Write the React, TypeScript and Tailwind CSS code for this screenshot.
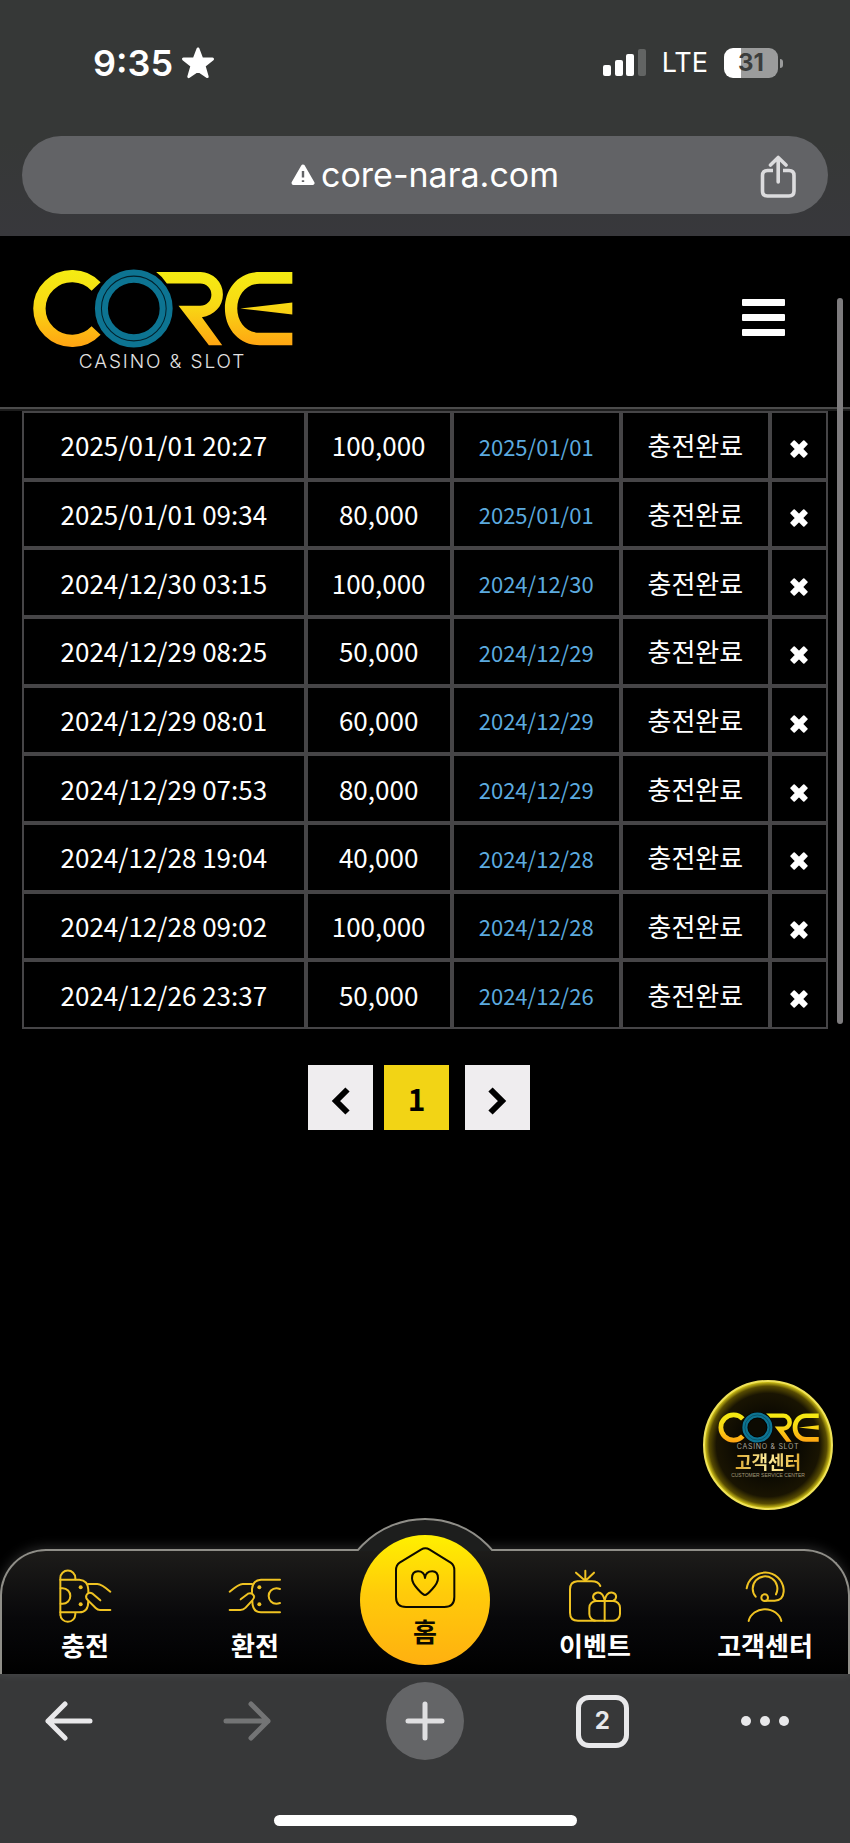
import React from "react";

type Deposit = { requested: string; amount: string; processed: string };

const deposits: Deposit[] = [
  { requested: "2025/01/01 20:27", amount: "100,000", processed: "2025/01/01" },
  { requested: "2025/01/01 09:34", amount: "80,000", processed: "2025/01/01" },
  { requested: "2024/12/30 03:15", amount: "100,000", processed: "2024/12/30" },
  { requested: "2024/12/29 08:25", amount: "50,000", processed: "2024/12/29" },
  { requested: "2024/12/29 08:01", amount: "60,000", processed: "2024/12/29" },
  { requested: "2024/12/29 07:53", amount: "80,000", processed: "2024/12/29" },
  { requested: "2024/12/28 19:04", amount: "40,000", processed: "2024/12/28" },
  { requested: "2024/12/28 09:02", amount: "100,000", processed: "2024/12/28" },
  { requested: "2024/12/26 23:37", amount: "50,000", processed: "2024/12/26" },
];

function CoreMark({ className, id }: { className: string; id: string }) {
  const fill = `url(#${id})`;
  return (
    <svg className={className} viewBox="96 118 782 236" aria-hidden="true">
      <defs>
        <linearGradient id={id} gradientUnits="userSpaceOnUse" x1="0" y1="120" x2="0" y2="350">
          <stop offset="0" stopColor="#f4ec12" />
          <stop offset="0.45" stopColor="#f8da14" />
          <stop offset="1" stopColor="#ffa412" />
        </linearGradient>
      </defs>
      <path d="M288 170A98 97 0 1 0 288 302" fill="none" stroke={fill} strokeWidth="37" />
      <path
        d="M468 127H600A67 67 0 0 1 668 194C668 230 642 256 605 262L666 346H626L535 228H600A33 33 0 0 0 600 161H500Q488 142 468 127Z"
        fill={fill}
      />
      <path
        d="M876 127H778C712 127 674 180 674 236C674 292 712 346 778 346H876V309H778C736 309 711 275 711 236C711 197 736 162 778 162H876Z"
        fill={fill}
      />
      <path d="M720 236L876 218V254Z" fill={fill} />
      <circle cx="401" cy="236" r="96" fill="none" stroke="#000" strokeWidth="50" />
      <circle cx="401" cy="236" r="97" fill="none" stroke="#0d7492" strokeWidth="39" />
      <circle cx="401" cy="236" r="97" fill="none" stroke="#02202b" strokeWidth="3" />
    </svg>
  );
}

function StatusBar() {
  return (
    <div className="flex h-[136px] items-center justify-between pr-[67px] pb-[10px] pl-[93px] text-white">
      <div className="flex items-center gap-2">
        <span className="text-[36px] leading-10 font-semibold">9:35</span>
        <svg className="h-8 w-[34px]" viewBox="0 0 34 32" aria-hidden="true">
          <path
            d="M17 2L20.8 12H31.5L23 18.8L26.2 29.6L17 23.3L7.8 29.6L11 18.8L2.500 12H13.200Z"
            fill="#fff"
            stroke="#fff"
            strokeWidth="3"
            strokeLinejoin="round"
          />
        </svg>
      </div>
      <div className="flex items-center">
        <svg className="h-7 w-[43px]" viewBox="0 0 43 28" aria-hidden="true">
          <rect x="0" y="16" width="8" height="11" rx="2" fill="#fff" />
          <rect x="12" y="11" width="8" height="16" rx="2" fill="#fff" />
          <rect x="23" y="5" width="8" height="22" rx="2" fill="#fff" />
          <rect x="35" y="0" width="8" height="27" rx="2" fill="#626463" />
        </svg>
        <span className="ml-4 text-[27px] leading-10">LTE</span>
        <div className="ml-4 flex h-[30px] w-[54px] items-center justify-center rounded-[9px] bg-[linear-gradient(90deg,#fff_17px,#9b9c9c_17px)] text-[24px] font-bold text-[#3b3d3c]">
          31
        </div>
        <span className="ml-[2px] h-[9px] w-[3px] rounded-r-full bg-[#9b9c9c]" />
      </div>
    </div>
  );
}

function AddressBar() {
  return (
    <div className="mx-[22px] flex h-[78px] items-center rounded-full bg-[#626366] pr-8 pl-[68px]">
      <button type="button" className="flex flex-1 items-center justify-center gap-[6px] text-[34px] leading-10 text-white">
        <svg className="h-[22px] w-6" viewBox="0 0 24 22" aria-hidden="true">
          <path d="M12 2.500L21.500 19H2.500Z" fill="#fff" stroke="#fff" strokeWidth="4" strokeLinejoin="round" />
          <path d="M12 7V13.500M12 16.300V18" stroke="#626366" strokeWidth="2.400" />
        </svg>
        <span>core-nara.com</span>
      </button>
      <button type="button" aria-label="공유">
        <svg className="mt-1 h-11 w-9" viewBox="0 0 36 44" fill="none" stroke="#dcdcde" strokeWidth="3.600" aria-hidden="true">
          <path d="M13 15.500H7.500Q2.500 15.500 2.500 20.500V36Q2.500 41 7.500 41H29Q34 41 34 36V20.500Q34 15.500 29 15.500H23" />
          <path d="M18.200 27V3M10.500 10L18.200 2.500L26 10" strokeLinecap="round" strokeLinejoin="round" />
        </svg>
      </button>
    </div>
  );
}

function SiteHeader() {
  return (
    <header className="flex h-[175px] items-start justify-between border-b-2 border-[#1c1c1c] pr-[65px] pl-8 shadow-[inset_0_-2px_0_#4b4b4b]">
      <a href="#home" className="flex flex-col items-center pt-[33px] text-[#e2e2e2]">
        <CoreMark className="h-[79px] w-[261px]" id="mark-header" />
        <span className="mt-1 text-[19px] leading-5 font-light tracking-widest">CASINO &amp; SLOT</span>
      </a>
      <button type="button" aria-label="메뉴" className="mt-[63px] flex w-[43px] flex-col gap-2">
        <span className="h-[7px] rounded-[1px] bg-white" />
        <span className="h-[7px] rounded-[1px] bg-white" />
        <span className="h-[7px] rounded-[1px] bg-white" />
      </button>
    </header>
  );
}

function DepositTable() {
  return (
    <div className="px-[22px]">
      <table className="h-[618px] w-full table-fixed border-separate border-spacing-0 text-center text-[26px] leading-8 text-white">
        <colgroup>
          <col className="w-[35.200%]" />
          <col className="w-[18.100%]" />
          <col className="w-[21%]" />
          <col className="w-[18.500%]" />
          <col className="w-[7.200%]" />
        </colgroup>
        <tbody>
          {deposits.map((d) => (
            <tr key={d.requested}>
              <td className="border-2 border-[#464547] p-0">{d.requested}</td>
              <td className="border-2 border-[#464547] p-0">{d.amount}</td>
              <td className="border-2 border-[#464547] p-0">
                <a href="#detail" className="text-[22px] text-[#5caadf]">
                  {d.processed}
                </a>
              </td>
              <td className="border-2 border-[#464547] p-0">충전완료</td>
              <td className="border-2 border-[#464547] p-0 pt-2">
                <button type="button" aria-label="삭제" className="mx-auto block">
                  <svg className="h-[18px] w-[18px]" viewBox="0 0 18 18" aria-hidden="true">
                    <path
                      d="M4.200 1.200L9 6L13.800 1.200L16.800 4.200L12 9L16.800 13.800L13.800 16.800L9 12L4.200 16.800L1.200 13.800L6 9L1.200 4.200Z"
                      fill="#fff"
                      stroke="#fff"
                      strokeWidth="1.800"
                      strokeLinejoin="round"
                    />
                  </svg>
                </button>
              </td>
            </tr>
          ))}
        </tbody>
      </table>
    </div>
  );
}

function Pagination() {
  return (
    <nav className="mt-9 flex justify-center pr-3 text-black">
      <button type="button" aria-label="이전" className="flex h-[65px] w-[65px] items-center justify-center bg-[#efedef]">
        <svg className="mt-[6px] h-7 w-5" viewBox="0 0 20 28" aria-hidden="true">
          <path d="M16.500 2.500L5 14L16.500 25.500" fill="none" stroke="#000" strokeWidth="6" strokeLinejoin="miter" />
        </svg>
      </button>
      <button type="button" className="ml-[11px] flex h-[65px] w-[65px] items-center justify-center bg-[#f2d415] text-[30px] leading-8 font-bold">
        1
      </button>
      <button type="button" aria-label="다음" className="ml-4 flex h-[65px] w-[65px] items-center justify-center bg-[#efedef]">
        <svg className="mt-[6px] h-7 w-5" viewBox="0 0 20 28" aria-hidden="true">
          <path d="M2.500 2.500L14 14L2.500 25.500" fill="none" stroke="#000" strokeWidth="6" strokeLinejoin="miter" />
        </svg>
      </button>
    </nav>
  );
}

function SupportBadge() {
  return (
    <a
      href="#support"
      className="absolute right-[17px] bottom-[39px] flex h-[130px] w-[130px] flex-col items-center rounded-full border-2 border-[#efe25a] bg-[radial-gradient(circle,#0c0a02_35%,#191402_58%,#574b02_66%,#d6c718_71%)] pt-[30px]"
    >
      <CoreMark className="h-[31px] w-[101px]" id="mark-badge" />
      <span className="font-['Inter',sans-serif] text-[7px] leading-2 tracking-widest text-[#a8a49a]">CASINO &amp; SLOT</span>
      <span className="bg-[linear-gradient(90deg,#d9a52c,#fff0a0_50%,#e0a92c)] bg-clip-text text-[18px] leading-5 font-bold text-transparent">
        고객센터
      </span>
      <span className="font-['Liberation_Sans_Narrow','Liberation_Sans',sans-serif] text-[5px] leading-2 whitespace-nowrap text-[#a39b7c]">
        CUSTOMER SERVICE CENTER
      </span>
    </a>
  );
}

const iconProps = {
  fill: "none",
  stroke: "#f0c322",
  strokeWidth: 6,
  strokeLinecap: "round" as const,
  strokeLinejoin: "round" as const,
  "aria-hidden": true,
};

function DepositIcon() {
  return (
    <svg className="h-[54px] w-[54px]" viewBox="172 176 162 162" {...iconProps}>
      <path d="M179 202V315M179 203A22 22 0 0 1 224 203V207M179 312A22 22 0 0 0 224 312V308" />
      <path d="M179 208H236Q262 210 263 238V246M263 272Q263 306 236 306H179" />
      <path d="M180 234H186A23 23 0 0 1 186 280H180" />
      <path d="M262 221H290Q302 221 329 244M299 270L276 250Q263 243 257 255Q254 263 262 270L285 293Q291 299 298 299H329" />
      <circle cx="240" cy="231" r="6" fill="#f0c322" stroke="none" />
      <circle cx="240" cy="282" r="6" fill="#f0c322" stroke="none" />
    </svg>
  );
}

function WithdrawIcon() {
  return (
    <svg className="h-[54px] w-[54px]" viewBox="683 176 162 162" {...iconProps}>
      <path d="M839 208H782Q757 210 755 236V246M756 272Q756 306 782 306H839" />
      <path d="M839 236Q833 234 828 234A23 23 0 0 0 828 280Q833 280 839 278" />
      <path d="M755 221H727Q716 221 688 244M721 267L743 250Q755 245 761 257Q763 263 756 270L736 292Q729 299 720 299H688" />
      <circle cx="777" cy="231" r="6" fill="#f0c322" stroke="none" />
      <circle cx="777" cy="282" r="6" fill="#f0c322" stroke="none" />
    </svg>
  );
}

function EventIcon() {
  return (
    <svg className="h-[54px] w-[54px]" viewBox="144 117 162 162" {...iconProps}>
      <path d="M241 168Q235 154 215 154H172Q150 156 150 178V248Q150 272 174 272H225" />
      <rect x="208" y="213" width="92" height="59" rx="20" />
      <path d="M254 213V272" />
      <path d="M254 211C250 192 240 186 230 188C216 192 216 207 228 212M254 211C258 192 268 186 278 188C292 192 291 207 280 212" />
      <path d="M196 152V122M193 150L168 128M199 150L222 128" />
    </svg>
  );
}

function SupportIcon() {
  return (
    <svg className="h-[54px] w-[54px]" viewBox="654 117 162 162" {...iconProps}>
      <path d="M680 175A56 56 0 0 1 791 178V185Q789 212 764 212H738" />
      <circle cx="734" cy="203" r="10" />
      <path d="M707 200A37 37 0 1 1 768 193" />
      <path d="M686 273A50 44 0 0 1 784 273" />
    </svg>
  );
}

function HomeIcon() {
  return (
    <svg className="h-[62px] w-[62px]" viewBox="191 140 186 186" {...iconProps} stroke="#0c0a00">
      <path d="M285 144Q279 144 272 148L208 187Q197 194 197 210V290Q197 320 227 320H342Q372 320 372 290V210Q372 194 361 187L298 148Q291 144 285 144Z" />
      <path d="M284 284Q278 284 262 266Q245 248 245 234Q245 213 263 213Q282 213 284 233Q286 213 306 213Q323 213 323 234Q323 248 306 266Q290 284 284 284Z" />
    </svg>
  );
}

function NavItem({ href, label, children }: { href: string; label: string; children: React.ReactNode }) {
  return (
    <a href={href} className="flex flex-col items-center pt-[18px]">
      {children}
      <span className="mt-[6px] text-[26px] leading-8 font-bold text-white">{label}</span>
    </a>
  );
}

function SiteNav() {
  return (
    <nav className="relative h-[125px] rounded-t-[46px] border-2 border-b-0 border-[#8f8e88] bg-[linear-gradient(#1d1c1a,#08080a_55%,#000)] shadow-[0_-2px_12px_rgba(255,255,255,0.15)]">
      <div className="absolute -top-[33px] left-1/2 h-[33px] w-[178px] -translate-x-1/2 overflow-hidden">
        <div className="h-[178px] rounded-full border-2 border-[#8f8e88] bg-[#1d1e1d]" />
      </div>
      <div className="-mx-[2px] grid grid-cols-5">
        <NavItem href="#deposit" label="충전">
          <DepositIcon />
        </NavItem>
        <NavItem href="#withdraw" label="환전">
          <WithdrawIcon />
        </NavItem>
        <a
          href="#home"
          className="relative -mt-4 flex h-[130px] w-[130px] flex-col items-center justify-self-center rounded-full bg-[linear-gradient(#fff000,#ffcb0a_45%,#ffb010)] pt-3"
        >
          <HomeIcon />
          <span className="mt-[6px] text-[26px] leading-8 font-bold text-[#0c0a00]">홈</span>
        </a>
        <NavItem href="#event" label="이벤트">
          <EventIcon />
        </NavItem>
        <NavItem href="#support" label="고객센터">
          <SupportIcon />
        </NavItem>
      </div>
    </nav>
  );
}

function BrowserToolbar() {
  return (
    <footer className="flex h-[169px] flex-col items-center justify-between bg-[#373839] pt-2 pb-[17px] font-['Inter',sans-serif]">
      <div className="flex w-full items-center justify-between pr-[61px] pl-[30px]">
        <button type="button" aria-label="뒤로" className="flex w-[78px] justify-center">
          <svg className="h-10 w-[50px]" viewBox="0 0 50 40" fill="none" stroke="#e8e8ea" strokeWidth="5" strokeLinecap="round" strokeLinejoin="round" aria-hidden="true">
            <path d="M46 20H4M21 3L4 20L21 37" />
          </svg>
        </button>
        <button type="button" aria-label="앞으로" className="flex w-[78px] justify-center">
          <svg className="h-10 w-[50px]" viewBox="0 0 50 40" fill="none" stroke="#737475" strokeWidth="5" strokeLinecap="round" strokeLinejoin="round" aria-hidden="true">
            <path d="M4 20H46M29 3L46 20L29 37" />
          </svg>
        </button>
        <button type="button" aria-label="새 탭" className="flex h-[78px] w-[78px] items-center justify-center rounded-full bg-[#646567]">
          <svg className="h-10 w-10" viewBox="0 0 40 40" stroke="#dfdfe1" strokeWidth="5" strokeLinecap="round" aria-hidden="true">
            <path d="M20 3V37M3 20H37" />
          </svg>
        </button>
        <div className="flex w-[78px] justify-center">
          <button type="button" className="flex h-[53px] w-[53px] items-center justify-center rounded-[13px] border-[5px] border-[#e8e8ea] text-[24px] leading-8 font-bold text-[#e8e8ea]">
            2
          </button>
        </div>
        <button type="button" aria-label="더보기" className="flex w-12 justify-between">
          <span className="h-[10px] w-[10px] rounded-full bg-[#e8e8ea]" />
          <span className="h-[10px] w-[10px] rounded-full bg-[#e8e8ea]" />
          <span className="h-[10px] w-[10px] rounded-full bg-[#e8e8ea]" />
        </button>
      </div>
      <div className="h-[11px] w-[303px] rounded-full bg-white" />
    </footer>
  );
}

export default function App() {
  return (
    <div className="flex min-h-screen flex-col bg-black font-['Noto_Sans_CJK_KR',sans-serif]">
      <div className="h-[236px] bg-[linear-gradient(#363837_60%,#38383c)] font-['Inter',sans-serif]">
        <StatusBar />
        <AddressBar />
      </div>
      <main className="relative flex-1">
        <div className="font-['Inter',sans-serif]">
          <SiteHeader />
        </div>
        <DepositTable />
        <Pagination />
        <div className="absolute top-[62px] right-[7px] h-[726px] w-[6px] rounded-full bg-[#7e7c7e]" />
        <SupportBadge />
      </main>
      <SiteNav />
      <BrowserToolbar />
    </div>
  );
}
